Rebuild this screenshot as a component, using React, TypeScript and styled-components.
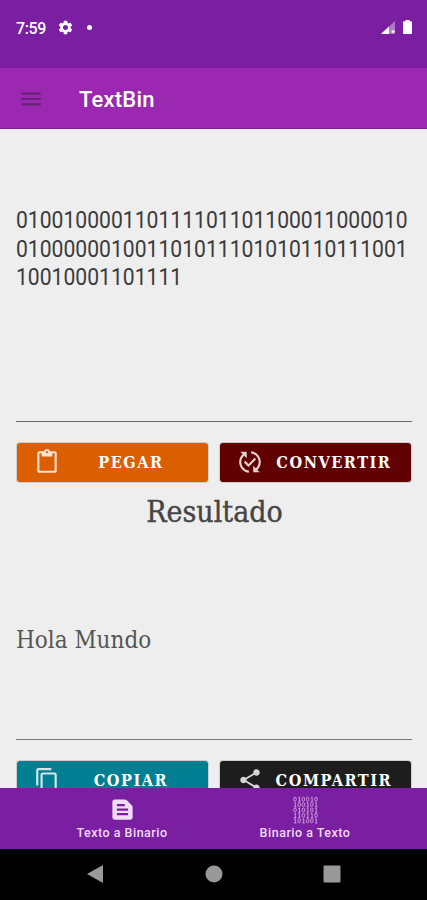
import React from "react";
import styled, { createGlobalStyle } from "styled-components";
import {
  MdContentCopy,
  MdContentPaste,
  MdMenu,
  MdPublishedWithChanges,
  MdSettings,
  MdShare,
  MdTextSnippet,
} from "react-icons/md";

const Global = createGlobalStyle`
  * { box-sizing: border-box; }
  body { margin: 0; background: #eee; }
`;

const sans = `Roboto, "Liberation Sans", sans-serif`;
const slab = `"DejaVu Serif Condensed", "DejaVu Serif", serif`;

const Screen = styled.div`
  display: flex;
  flex-direction: column;
  width: 427px;
  height: 900px;
  overflow: hidden;
  background: #eeeeee;
  font-family: ${sans};
`;

const StatusBar = styled.header`
  display: flex;
  flex: none;
  align-items: flex-start;
  height: 68px;
  padding: 18px 15px 0 16px;
  background: #7b1fa2;
  color: #fff;
`;

const Clock = styled.span`
  width: 41px;
  font-size: 16px;
  font-weight: 500;
  line-height: 21px;
  letter-spacing: -0.4px;
`;

const StatusIcon = styled.span`
  display: flex;
  height: 18px;
  align-items: center;
`;

const Dot = styled.i`
  width: 5px;
  height: 5px;
  margin: 7px 0 0 13px;
  border-radius: 50%;
  background: #fff;
`;

const StatusRight = styled.div`
  display: flex;
  gap: 8px;
  margin: 1px 0 0 auto;
`;

const AppBar = styled.div`
  display: flex;
  flex: none;
  align-items: center;
  height: 61px;
  padding: 2px 0 0 18px;
  background: #9c27b0;
  border-bottom: 1px solid #85209a;
  color: #662576;
`;

const Title = styled.h1`
  margin: 2px 0 0 35px;
  color: #fff;
  font-size: 22px;
  font-weight: 500;
  line-height: 28px;
  letter-spacing: 0.2px;
`;

const Content = styled.main`
  flex: 1;
  min-height: 0;
  overflow: hidden;
  padding: 0 15px 0 16px;
`;

const BinaryField = styled.div`
  height: 293px;
  padding-top: 77px;
  border-bottom: 1.5px solid #6c6c6c;
`;

const BinaryText = styled.p`
  width: max-content;
  margin: 0;
  color: #3b3b3b;
  font-size: 24px;
  font-weight: 400;
  line-height: 28.6px;
  transform: scaleX(0.88);
  transform-origin: left;
`;

const ResultField = styled.div`
  height: 210px;
  padding-top: 93px;
  border-bottom: 1.5px solid #777;
  color: #555;
  font: 24px/34px ${slab};
`;

const ButtonRow = styled.div`
  display: grid;
  grid-template-columns: 193px 193px;
  gap: 10px;
  padding-top: 20px;
`;

const ActionButton = styled.button<{ $color: string }>`
  display: flex;
  align-items: center;
  height: 41px;
  padding: 0 11px 2px 17px;
  border: 1px solid #0002;
  border-radius: 4px;
  background: ${(p) => p.$color};
  background-clip: padding-box;
  color: #fff;
  font: bold 17px/24px ${slab};
`;

const ButtonIcon = styled.span`
  display: flex;
  flex: none;
  opacity: 0.82;
`;

const ButtonLabel = styled.span`
  flex: 1;
  display: flex;
  justify-content: center;
  padding-left: 5px;
  letter-spacing: 1.6px;
  transform: scaleX(0.95);
`;

const ResultTitle = styled.h2`
  margin: 0;
  padding: 10px 0 0 1px;
  height: 47px;
  color: #454545;
  font: 30px/38px ${slab};
  -webkit-text-stroke: 0.4px #454545;
  text-align: center;
`;

const Tabs = styled.nav`
  display: flex;
  justify-content: center;
  flex: none;
  height: 61px;
  background: #7b1fa2;
`;

const Tab = styled.div`
  display: flex;
  flex-direction: column;
  align-items: center;
  width: 183px;
  padding-top: 8px;
  color: #f0dcf6;
`;

const TabLabel = styled.span`
  margin-top: 2px;
  font-size: 12.5px;
  font-weight: 500;
  line-height: 16px;
  letter-spacing: 0.5px;
`;

const TabIcon = styled.span`
  display: flex;
  align-items: center;
  height: 27px;
`;

const SystemNav = styled.footer`
  display: flex;
  flex: none;
  align-items: center;
  justify-content: space-between;
  height: 51px;
  padding: 0 86px 1px 86px;
  background: #000;
`;

const digitRows = ["010010", "100101", "010101", "110110", "101001"];

function BinaryIcon() {
  return (
    <svg width="27" height="28" viewBox="0 0 27 28" fill="none" stroke="#d0a0de" strokeWidth="0.9">
      {digitRows.map((row, r) =>
        row.split("").map((digit, c) =>
          digit === "0" ? (
            <ellipse key={`${r}${c}`} cx={3 + c * 4.2} cy={3.2 + r * 5.4} rx="1.3" ry="2" />
          ) : (
            <path key={`${r}${c}`} d={`M${2 + c * 4.2} ${1.8 + r * 5.4}l1.3-.7v4.3m-1.3 0h2.4`} />
          ),
        ),
      )}
    </svg>
  );
}

function SignalIcon() {
  return (
    <svg width="14" height="16" viewBox="0 0 14 16">
      <path d="M0 15L14 2v13Z" fill="#ad77c5" />
      <path d="M0 15L8 7.5V15Z" fill="#fff" />
      <path d="M10.5 12.5h3" stroke="#fff" strokeWidth="2.4" />
    </svg>
  );
}

function BatteryIcon() {
  return (
    <svg width="9" height="16" viewBox="0 0 9 16" fill="#fff">
      <path d="M2.5 1h4v1.2H8a1 1 0 0 1 1 1V14a1 1 0 0 1-1 1H1a1 1 0 0 1-1-1V3.2a1 1 0 0 1 1-1h1.5Z" />
    </svg>
  );
}

export default function App() {
  return (
    <Screen>
      <Global />
      <StatusBar>
        <Clock>7:59</Clock>
        <StatusIcon><MdSettings size={17} /></StatusIcon>
        <Dot />
        <StatusRight><SignalIcon /><BatteryIcon /></StatusRight>
      </StatusBar>
      <AppBar>
        <MdMenu size={26} />
        <Title>TextBin</Title>
      </AppBar>
      <Content>
        <BinaryField>
          <BinaryText>
            010010000110111101101100011000010<br />
            010000001001101011101010110111001<br />
            10010001101111
          </BinaryText>
        </BinaryField>
        <ButtonRow>
          <ActionButton $color="#db5e00">
            <ButtonIcon><MdContentPaste size={26} /></ButtonIcon>
            <ButtonLabel>PEGAR</ButtonLabel>
          </ActionButton>
          <ActionButton $color="#600000">
            <ButtonIcon><MdPublishedWithChanges size={26} /></ButtonIcon>
            <ButtonLabel>CONVERTIR</ButtonLabel>
          </ActionButton>
        </ButtonRow>
        <ResultTitle>Resultado</ResultTitle>
        <ResultField>Hola Mundo</ResultField>
        <ButtonRow>
          <ActionButton $color="#007e92">
            <ButtonIcon><MdContentCopy size={26} /></ButtonIcon>
            <ButtonLabel>COPIAR</ButtonLabel>
          </ActionButton>
          <ActionButton $color="#1d1d1d">
            <ButtonIcon><MdShare size={26} /></ButtonIcon>
            <ButtonLabel>COMPARTIR</ButtonLabel>
          </ActionButton>
        </ButtonRow>
      </Content>
      <Tabs>
        <Tab>
          <TabIcon><MdTextSnippet size={27} /></TabIcon>
          <TabLabel>Texto a Binario</TabLabel>
        </Tab>
        <Tab>
          <TabIcon><BinaryIcon /></TabIcon>
          <TabLabel>Binario a Texto</TabLabel>
        </Tab>
      </Tabs>
      <SystemNav>
        <svg width="18" height="20" viewBox="0 0 18 20"><path d="M1 10L17 1v18Z" fill="#999" /></svg>
        <svg width="18" height="18" viewBox="0 0 18 18"><circle cx="9" cy="9" r="8.5" fill="#999" /></svg>
        <svg width="18" height="18" viewBox="0 0 18 18"><rect x="0.5" y="0.5" width="17" height="17" rx="1" fill="#999" /></svg>
      </SystemNav>
    </Screen>
  );
}
